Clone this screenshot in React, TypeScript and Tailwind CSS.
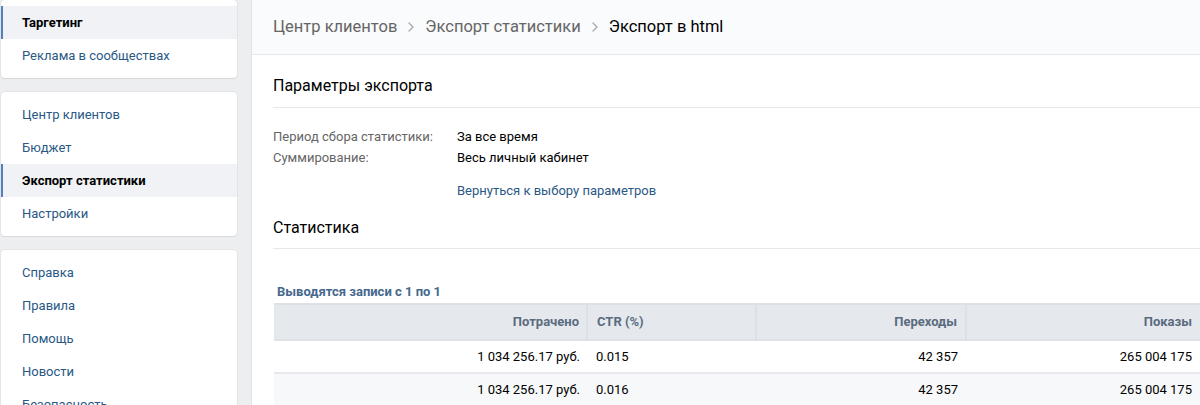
import { ChevronRight } from 'lucide-react';

type NavItem = { label: string; active?: boolean };

const groups: NavItem[][] = [
  [{ label: 'Таргетинг', active: true }, { label: 'Реклама в сообществах' }],
  [
    { label: 'Центр клиентов' },
    { label: 'Бюджет' },
    { label: 'Экспорт статистики', active: true },
    { label: 'Настройки' },
  ],
  [
    { label: 'Справка' },
    { label: 'Правила' },
    { label: 'Помощь' },
    { label: 'Новости' },
    { label: 'Безопасность' },
  ],
];

const rows = [
  { spent: '1 034 256.17 руб.', ctr: '0.015', clicks: '42 357', shows: '265 004 175' },
  { spent: '1 034 256.17 руб.', ctr: '0.016', clicks: '42 357', shows: '265 004 175' },
];

function Sidebar() {
  return (
    <div className="w-[236px] shrink-0 flex flex-col gap-[14px]">
      {groups.map((items, i) => (
        <div key={i} className="bg-white rounded-[4px] shadow-[0_1px_0_0_#d7d8db,0_0_0_1px_#e3e4e8] py-[6px]">
          {items.map(item => (
            <div
              key={item.label}
              className={
                item.active
                  ? 'h-[33px] flex items-center pl-[19px] border-l-2 border-[#5181b8] bg-[#f0f2f5] text-[13px] font-bold text-black'
                  : 'h-[33px] flex items-center pl-[19px] border-l-2 border-transparent text-[13px] text-[#2a5885]'
              }
            >
              {item.label}
            </div>
          ))}
        </div>
      ))}
    </div>
  );
}

export default function App() {
  return (
    <div className="h-[405px] overflow-hidden bg-[#edeef0] flex gap-[15px] pl-[1px] font-['Roboto',sans-serif]">
      <Sidebar />

      <div className="flex-1 min-w-0 bg-white shadow-[0_0_0_1px_#e3e4e8] overflow-hidden">
        {/* breadcrumbs */}
        <div className="h-[55px] bg-[#fafbfc] border-b border-[#e7e8ec] flex items-center pl-[21px] text-[16.5px]">
          <span className="text-[#656565]">Центр клиентов</span>
          <ChevronRight className="w-4 h-4 mx-[6px] text-[#a8adb3]" strokeWidth={2} />
          <span className="text-[#656565]">Экспорт статистики</span>
          <ChevronRight className="w-4 h-4 mx-[6px] text-[#a8adb3]" strokeWidth={2} />
          <span className="text-black">Экспорт в html</span>
        </div>

        <div className="pl-[21px]">
          {/* export params */}
          <div className="h-[53px] pt-[21px] border-b border-[#e7e8ec] text-[16px] leading-[19px] text-black">
            Параметры экспорта
          </div>

          <div className="pt-[18px] text-[13px]">
            <div className="flex h-[21px] items-center">
              <span className="w-[184px] text-[#656565]">Период сбора статистики:</span>
              <span className="text-black">За все время</span>
            </div>
            <div className="flex h-[21px] items-center">
              <span className="w-[184px] text-[#656565]">Суммирование:</span>
              <span className="text-black">Весь личный кабинет</span>
            </div>
            <div className="flex h-[21px] items-center mt-[12px]">
              <span className="w-[184px]" />
              <span className="text-[#2a5885]">Вернуться к выбору параметров</span>
            </div>
          </div>

          {/* stats */}
          <div className="h-[48px] flex items-end pb-[11px] border-b border-[#e7e8ec] text-[16px] leading-[19px] text-black">
            Статистика
          </div>

          <div className="pt-[33px] pl-1 text-[13px] font-bold text-[#45688e] h-[55px]">
            Выводятся записи с 1 по 1
          </div>

          <table className="border-collapse text-[13px] table-fixed w-[1000px] ml-[1px] -mt-[1px]">
            <colgroup>
              <col className="w-[313px]" />
              <col className="w-[169px]" />
              <col className="w-[210px]" />
              <col className="w-[234px]" />
              <col />
            </colgroup>
            <thead>
              <tr className="h-[36px] bg-[#e5e9ee] border-y-2 border-[#dce1e6] text-[#5b6b7e] font-bold">
                <th className="text-right pr-[7px] font-bold border-r-2 border-[#dce1e6]">Потрачено</th>
                <th className="text-left pl-[9px] font-bold border-r-2 border-[#dce1e6]">CTR (%)</th>
                <th className="text-right pr-[8px] font-bold border-r-2 border-[#dce1e6]">Переходы</th>
                <th className="text-right pr-[8px] font-bold">Показы</th>
                <th />
              </tr>
            </thead>
            <tbody className="text-black">
              {rows.map((r, i) => (
                <tr key={i} className={i % 2 ? 'h-[33px] bg-[#f7f8fa] border-b border-[#e7e8ec]' : 'h-[33px] bg-white border-b-2 border-[#e7e8ec]'}>
                  <td className="text-right pr-[7px]">{r.spent}</td>
                  <td className="text-left pl-[9px]">{r.ctr}</td>
                  <td className="text-right pr-[8px]">{r.clicks}</td>
                  <td className="text-right pr-[8px]">{r.shows}</td>
                  <td />
                </tr>
              ))}
            </tbody>
          </table>
        </div>
      </div>
    </div>
  );
}
